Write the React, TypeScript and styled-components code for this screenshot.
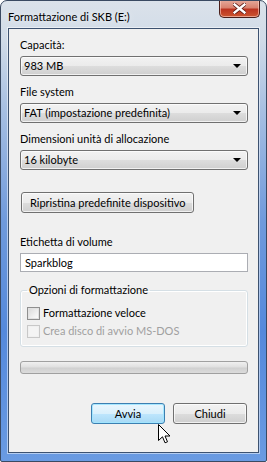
import React from 'react'
import styled, { createGlobalStyle } from 'styled-components'

const GlobalStyle = createGlobalStyle`
    html, body {
        margin: 0;
        padding: 0;
        background: #ffffff;
    }
    body {
        font-family: Lato, 'Noto Sans', Arial, sans-serif;
        font-size: 11px;
        color: #000;
    }
`

const selects = [
    { label: 'Capacità:', value: '983 MB' },
    { label: 'File system', value: 'FAT (impostazione predefinita)' },
    { label: 'Dimensioni unità di allocazione', value: '16 kilobyte' }
]

const App = function (): JSX.Element {
    return (
        <>
            <GlobalStyle />
            <Window>
                <TitleBar>
                    <Title>Formattazione di SKB (E:)</Title>
                    <CloseButton type="button" aria-label="Chiudi">
                        <svg width="13" height="11" viewBox="0 0 13 11">
                            <path
                                d="M1.5 1.5 L11.5 9.5 M11.5 1.5 L1.5 9.5"
                                stroke="#5a1a14"
                                strokeWidth="4"
                                strokeLinecap="square"
                            />
                            <path
                                d="M1.5 1.5 L11.5 9.5 M11.5 1.5 L1.5 9.5"
                                stroke="#ffffff"
                                strokeWidth="2.4"
                                strokeLinecap="square"
                            />
                        </svg>
                    </CloseButton>
                </TitleBar>
                <Client>
                    {selects.map(item => (
                        <Field key={item.label}>
                            <Label>{item.label}</Label>
                            <Select>
                                <span>{item.value}</span>
                                <Arrow />
                            </Select>
                        </Field>
                    ))}
                    <ResetRow>
                        <PushButton type="button" $wide>
                            Ripristina predefinite dispositivo
                        </PushButton>
                    </ResetRow>
                    <Field>
                        <Label>Etichetta di volume</Label>
                        <TextBox>Sparkblog</TextBox>
                    </Field>
                    <Group>
                        <Legend>Opzioni di formattazione</Legend>
                        <CheckRow>
                            <CheckBox />
                            <span>Formattazione veloce</span>
                        </CheckRow>
                        <CheckRow $disabled>
                            <CheckBox $disabled />
                            <span>Crea disco di avvio MS-DOS</span>
                        </CheckRow>
                    </Group>
                    <Progress />
                    <Buttons>
                        <PushButton type="button" $default>
                            Avvia
                            <Cursor width="13" height="20" viewBox="0 0 13 20">
                                <path
                                    d="M0.5 0.5 L0.5 16.5 L4.5 12.8 L7 18.8 L9.5 17.8 L7 12 L12 12 Z"
                                    fill="#ffffff"
                                    stroke="#000000"
                                    strokeWidth="1"
                                />
                            </Cursor>
                        </PushButton>
                        <PushButton type="button">Chiudi</PushButton>
                    </Buttons>
                </Client>
            </Window>
        </>
    )
}

export default App

const Window = styled.div`
    width: 267px;
    height: 462px;
    box-sizing: border-box;
    border: 1px solid #3a4a62;
    border-radius: 7px 7px 2px 2px;
    background: linear-gradient(
        180deg,
        #dbe2ea 0px,
        #d0dbe8 40px,
        #a6bfe2 110px,
        #6f9adc 220px,
        #5489dc 330px,
        #6a9be2 462px
    );
    display: flex;
    flex-direction: column;
    padding: 0 7px 8px 7px;
    overflow: hidden;
`

const TitleBar = styled.div`
    height: 27px;
    display: flex;
    align-items: flex-start;
    justify-content: space-between;
`

const Title = styled.div`
    padding: 8px 0 0 0;
    line-height: 16px;
    font-size: 11px;
    color: #000;
    text-shadow: 0 0 6px rgba(255, 255, 255, 0.9);
`

const CloseButton = styled.button`
    width: 41px;
    height: 18px;
    margin: -1px -1px 0 0;
    padding: 0;
    border: 1px solid #4a1f1a;
    border-top: none;
    border-radius: 0 0 5px 5px;
    background: linear-gradient(180deg, #e6ab9c 0%, #d9826f 45%, #bc3420 55%, #cc5630 100%);
    box-shadow: inset 0 0 0 1px rgba(255, 210, 200, 0.6);
    display: flex;
    align-items: center;
    justify-content: center;
`

const Client = styled.div`
    flex: 1;
    background: #f0f0f0;
    border: 1px solid #3d5270;
    box-shadow: 0 0 0 1px rgba(255, 255, 255, 0.5);
    padding: 8px 10px 0 11px;
    display: flex;
    flex-direction: column;
    position: relative;
`

const Field = styled.div`
    display: flex;
    flex-direction: column;
    gap: 3px;
    margin-top: 8px;

    &:first-child {
        margin-top: 0;
    }
`

const Label = styled.div`
    line-height: 16px;
`

const Select = styled.div`
    height: 20px;
    box-sizing: border-box;
    border: 1px solid #707070;
    border-radius: 3px;
    background: linear-gradient(180deg, #f2f2f2 0%, #ebebeb 50%, #dddddd 51%, #cfcfcf 100%);
    box-shadow: inset 0 0 0 1px rgba(255, 255, 255, 0.7);
    display: flex;
    align-items: center;
    justify-content: space-between;
    padding: 0 5px 0 3px;
    line-height: 16px;
`

const Arrow = styled.div`
    width: 0;
    height: 0;
    border-left: 4px solid transparent;
    border-right: 4px solid transparent;
    border-top: 4px solid #000;
    margin-right: 1px;
`

const ResetRow = styled.div`
    display: flex;
    margin-top: 22px;
    margin-bottom: 13px;
    padding-left: 1px;
`

const PushButton = styled.button<{ $wide?: boolean; $default?: boolean }>`
    position: relative;
    font-family: inherit;
    font-size: 11px;
    color: #000;
    height: 21px;
    width: ${p => (p.$wide ? 'auto' : '74px')};
    padding: ${p => (p.$wide ? '0 8px' : '0')};
    border: 1px solid ${p => (p.$default ? '#3c7fb1' : '#707070')};
    border-radius: 3px;
    background: ${p =>
        p.$default
            ? 'linear-gradient(180deg, #eaf6fd 0%, #d9f0fc 50%, #bee6fd 51%, #a7d9f5 100%)'
            : 'linear-gradient(180deg, #f2f2f2 0%, #ebebeb 50%, #dddddd 51%, #cfcfcf 100%)'};
    box-shadow: inset 0 0 0 1px ${p => (p.$default ? 'rgba(160, 230, 255, 0.9)' : 'rgba(255, 255, 255, 0.7)')};
    line-height: 17px;
`

const TextBox = styled.div`
    height: 19px;
    box-sizing: border-box;
    border: 1px solid #abadb3;
    border-top-color: #abadb3;
    background: #fff;
    padding: 0 4px;
    line-height: 17px;
`

const Group = styled.fieldset`
    margin: 10px 0 0 0;
    padding: 0 6px 7px 6px;
    border: 1px solid #d5dfe5;
    border-radius: 3px;
    box-shadow: inset 0 0 0 1px #ffffff;
    display: flex;
    flex-direction: column;
    gap: 2px;
`

const Legend = styled.legend`
    padding: 0 2px;
    margin-left: 0;
    margin-bottom: 7px;
    line-height: 16px;
`

const CheckRow = styled.label<{ $disabled?: boolean }>`
    display: flex;
    align-items: center;
    gap: 3px;
    line-height: 16px;
    color: ${p => (p.$disabled ? '#a0a0a0' : '#000')};
`

const CheckBox = styled.span<{ $disabled?: boolean }>`
    width: 13px;
    height: 13px;
    box-sizing: border-box;
    border: 1px solid ${p => (p.$disabled ? '#c8c8c8' : '#8f8f8f')};
    background: ${p =>
        p.$disabled ? '#f4f4f4' : 'linear-gradient(135deg, #d8d8d8 0%, #f0f0f0 60%, #ffffff 100%)'};
    box-shadow: inset 0 0 0 1px ${p => (p.$disabled ? '#f0f0f0' : '#e2e2e2')};
`

const Progress = styled.div`
    margin-top: 14px;
    height: 13px;
    box-sizing: border-box;
    border: 1px solid #a0a0a0;
    border-radius: 3px;
    background: linear-gradient(180deg, #f0f0f0 0%, #e0e0e0 45%, #d0d0d0 55%, #dcdcdc 100%);
`

const Buttons = styled.div`
    display: flex;
    justify-content: flex-end;
    gap: 8px;
    margin-top: 29px;
    padding-right: 1px;
`

const Cursor = styled.svg`
    position: absolute;
    left: 66px;
    top: 20px;
`
